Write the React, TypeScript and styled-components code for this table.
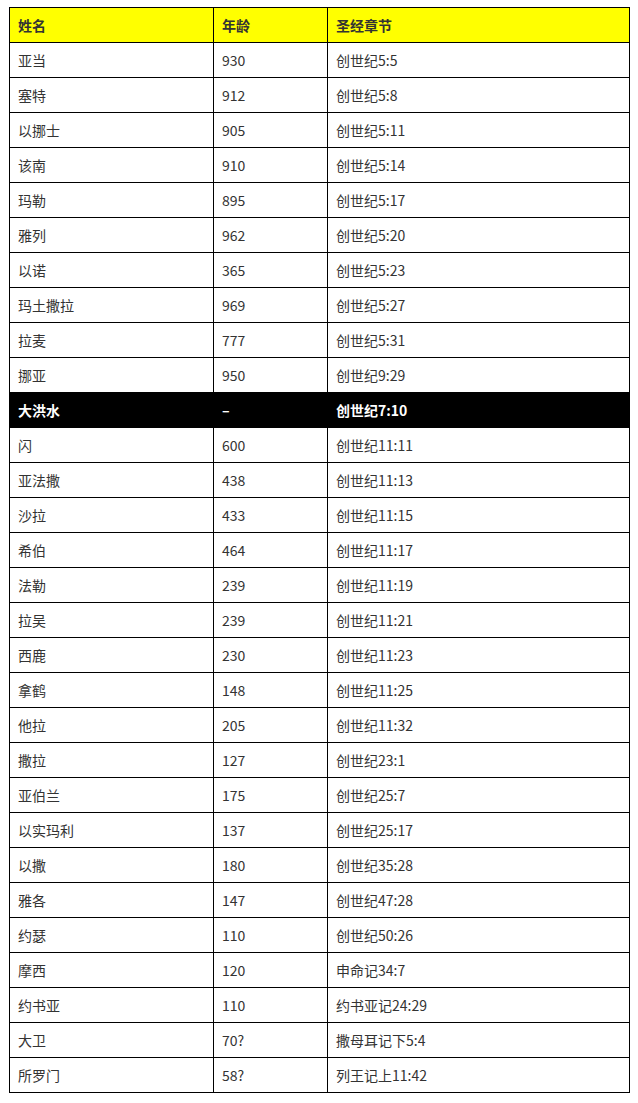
import React from "react";
import styled, { createGlobalStyle } from "styled-components";

const GlobalStyle = createGlobalStyle`
  html, body { margin: 0; padding: 0; background: #fff; }
  body { font-family: "Noto Sans CJK SC", "Noto Sans", sans-serif; }
`;

const Page = styled.div`
  padding: 7px 0 0 9px;
`;

const Table = styled.table`
  border-collapse: collapse;
  table-layout: fixed;
  width: 620px;
  font-size: 14px;
  color: #333;
`;

const HeadRow = styled.tr`
  background: #ffff00;
`;

const Row = styled.tr<{ $dark?: boolean }>`
  background: ${(p) => (p.$dark ? "#000" : "#fff")};
  color: ${(p) => (p.$dark ? "#fff" : "#333")};
  font-weight: ${(p) => (p.$dark ? 700 : 400)};
`;

const Th = styled.th`
  border: 1px solid #000;
  height: 35px;
  padding: 0 0 0 8px;
  text-align: left;
  font-weight: 700;
  line-height: 20px;
  box-sizing: border-box;
`;

const Td = styled.td`
  border: 1px solid #000;
  height: 35px;
  padding: 0 0 0 8px;
  text-align: left;
  line-height: 20px;
  box-sizing: border-box;
  white-space: nowrap;
`;

type Entry = [string, string, string, boolean?];

const rows: Entry[] = [
  ["亚当", "930", "创世纪5:5"],
  ["塞特", "912", "创世纪5:8"],
  ["以挪士", "905", "创世纪5:11"],
  ["该南", "910", "创世纪5:14"],
  ["玛勒", "895", "创世纪5:17"],
  ["雅列", "962", "创世纪5:20"],
  ["以诺", "365", "创世纪5:23"],
  ["玛土撒拉", "969", "创世纪5:27"],
  ["拉麦", "777", "创世纪5:31"],
  ["挪亚", "950", "创世纪9:29"],
  ["大洪水", "–", "创世纪7:10", true],
  ["闪", "600", "创世纪11:11"],
  ["亚法撒", "438", "创世纪11:13"],
  ["沙拉", "433", "创世纪11:15"],
  ["希伯", "464", "创世纪11:17"],
  ["法勒", "239", "创世纪11:19"],
  ["拉吴", "239", "创世纪11:21"],
  ["西鹿", "230", "创世纪11:23"],
  ["拿鹤", "148", "创世纪11:25"],
  ["他拉", "205", "创世纪11:32"],
  ["撒拉", "127", "创世纪23:1"],
  ["亚伯兰", "175", "创世纪25:7"],
  ["以实玛利", "137", "创世纪25:17"],
  ["以撒", "180", "创世纪35:28"],
  ["雅各", "147", "创世纪47:28"],
  ["约瑟", "110", "创世纪50:26"],
  ["摩西", "120", "申命记34:7"],
  ["约书亚", "110", "约书亚记24:29"],
  ["大卫", "70?", "撒母耳记下5:4"],
  ["所罗门", "58?", "列王记上11:42"],
];

export default function App() {
  return (
    <>
      <GlobalStyle />
      <Page>
        <Table>
          <colgroup>
            <col style={{ width: 204 }} />
            <col style={{ width: 114 }} />
            <col style={{ width: 302 }} />
          </colgroup>
          <thead>
            <HeadRow>
              <Th>姓名</Th>
              <Th>年龄</Th>
              <Th>圣经章节</Th>
            </HeadRow>
          </thead>
          <tbody>
            {rows.map(([name, age, ref, dark]) => (
              <Row key={name} $dark={dark}>
                <Td>{name}</Td>
                <Td>{age}</Td>
                <Td>{ref}</Td>
              </Row>
            ))}
          </tbody>
        </Table>
      </Page>
    </>
  );
}
